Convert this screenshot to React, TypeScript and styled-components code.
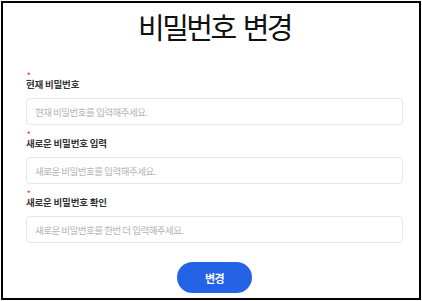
import React from "react";
import styled, { createGlobalStyle } from "styled-components";

const Global = createGlobalStyle`
  html, body { margin: 0; padding: 0; background: #ffffff; }
  body { font-family: "Noto Sans CJK KR", "Noto Sans", sans-serif; }
  * { box-sizing: border-box; }
`;

const Frame = styled.div`
  margin: 1px 0 0 1px;
  width: 420px;
  height: 299px;
  border: 2px solid #000;
  padding: 5px 16px 0 23px;
  display: flex;
  flex-direction: column;
`;

const Title = styled.h1`
  margin: 0;
  font-size: 29px;
  line-height: 36px;
  font-weight: 400;
  letter-spacing: -2.5px;
  word-spacing: 4px;
  color: #111;
  text-align: center;
`;

const Form = styled.form`
  margin-top: 28.5px;
  display: flex;
  flex-direction: column;
  gap: 6.5px;
`;

const Field = styled.div`
  display: flex;
  flex-direction: column;
  gap: 8.5px;
`;

const Label = styled.label`
  display: flex;
  flex-direction: column;
  align-items: flex-start;
  font-size: 9.5px;
  font-weight: 700;
  letter-spacing: -0.2px;
  color: #333;
`;

const Required = styled.span`
  display: block;
  height: 5px;
  margin-left: 1px;
  font-size: 7px;
  line-height: 5px;
  color: #e53935;
  font-weight: 700;
`;

const LabelText = styled.span`
  display: block;
  line-height: 12px;
`;

const Input = styled.input`
  width: 100%;
  height: 27px;
  border: 1px solid #e6e6e6;
  border-radius: 4px;
  padding: 0 8px;
  font-family: "Noto Sans CJK KR", "Noto Sans", sans-serif;
  font-size: 9.5px;
  letter-spacing: -0.5px;
  color: #333;
  outline: none;
  background: #fff;
  &::placeholder { color: #b3b3b3; }
`;

const ButtonRow = styled.div`
  display: flex;
  justify-content: center;
  margin-top: 19px;
`;

const SubmitButton = styled.button`
  width: 75px;
  height: 31px;
  border: none;
  border-radius: 16px;
  background: #2563e6;
  color: #fff;
  font-family: "Noto Sans CJK KR", "Noto Sans", sans-serif;
  font-size: 11px;
  font-weight: 700;
  letter-spacing: -0.5px;
  cursor: pointer;
`;

const fields = [
  { label: "현재 비밀번호", placeholder: "현재 비밀번호를 입력해주세요." },
  { label: "새로운 비밀번호 입력", placeholder: "새로운 비밀번호를 입력해주세요." },
  { label: "새로운 비밀번호 확인", placeholder: "새로운 비밀번호를 한번 더 입력해주세요." },
];

export default function App() {
  return (
    <>
      <Global />
      <Frame>
        <Title>비밀번호 변경</Title>
        <Form onSubmit={(e) => e.preventDefault()}>
          {fields.map((f) => (
            <Field key={f.label}>
              <Label>
                <Required>*</Required>
                <LabelText>{f.label}</LabelText>
              </Label>
              <Input type="password" placeholder={f.placeholder} />
            </Field>
          ))}
        </Form>
        <ButtonRow>
          <SubmitButton type="button">변경</SubmitButton>
        </ButtonRow>
      </Frame>
    </>
  );
}
